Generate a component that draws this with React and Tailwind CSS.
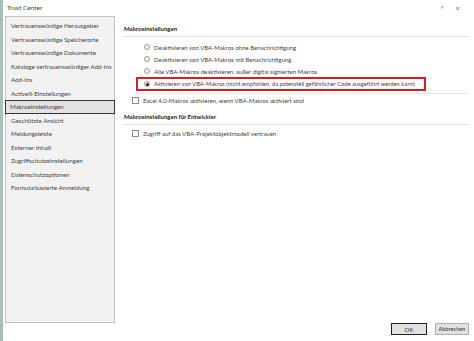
const navItems = [
  'Vertrauenswürdige Herausgeber',
  'Vertrauenswürdige Speicherorte',
  'Vertrauenswürdige Dokumente',
  'Kataloge vertrauenswürdiger Add-Ins',
  'Add-Ins',
  'ActiveX-Einstellungen',
  'Makroeinstellungen',
  'Geschützte Ansicht',
  'Meldungsleiste',
  'Externer Inhalt',
  'Zugriffschutzeinstellungen',
  'Datenschutzoptionen',
  'Formularbasierte Anmeldung',
];

const radios = [
  'Deaktivieren von VBA-Makros ohne Benachrichtigung',
  'Deaktivieren von VBA-Makros mit Benachrichtigung',
  'Alle VBA-Makros deaktivieren, außer digital signierten Makros',
];

const Radio = ({ checked }) => (
  <span className="w-[6px] h-[6px] rounded-full border border-[#9a9a9a] bg-[#f4f4f4] flex items-center justify-center shrink-0">
    {checked && <span className="w-[3px] h-[3px] rounded-full bg-[#222]" />}
  </span>
);

const Check = () => <span className="w-[7px] h-[7px] border border-[#8a8a8a] bg-white shrink-0" />;

export default function App() {
  return (
    <div className="w-[474px] h-[341px] flex bg-white text-[#333] overflow-hidden whitespace-nowrap" style={{ fontFamily: 'Lato, "Noto Sans", sans-serif' }}>
      <div className="w-[3px] bg-[#a7c0b9] shrink-0" />
      <div className="flex-1 flex flex-col">
        <div className="h-[16px] flex items-center pl-[4px] pr-[14px] text-[6.5px] text-[#444]">
          <span className="flex-1">Trust Center</span>
          <span className="text-[#777] mr-[12px]">?</span>
          <span className="text-[#777] text-[8px]">×</span>
        </div>
        <div className="flex-1 flex">
          <div className="ml-[2px] w-[110px] h-[307px] bg-[#f2f2f2] border border-[#c4c4c4] pt-[2px] text-[6.2px] text-[#444]">
            {navItems.map((item) => (
              <div
                key={item}
                className={
                  item === 'Makroeinstellungen'
                    ? 'h-[13.5px] flex items-center pl-[4px] border border-[#333] bg-[#e2e2e2] -mx-[1px]'
                    : 'h-[13.5px] flex items-center pl-[5px]'
                }
              >
                {item}
              </div>
            ))}
          </div>
          <div className="flex-1 pl-[9px] pr-[6px] pt-[8px] text-[6px] text-[#444]">
            <div className="font-bold text-[#222] pb-[3px] border-b border-[#e4e4e4]">Makroeinstellungen</div>
            <div className="pl-[20px] pt-[4px] flex flex-col">
              {radios.map((r) => (
                <div key={r} className="h-[12px] flex items-center gap-[4px]">
                  <Radio />
                  <span>{r}</span>
                </div>
              ))}
            </div>
            <div className="ml-[12px] mr-[42px] h-[14px] border-2 border-[#d0202a] flex items-center gap-[4px] pl-[6px] text-[5.8px]">
              <Radio checked />
              <span>Aktivieren von VBA-Makros (nicht empfohlen, da potenziell gefährlicher Code ausgeführt werden kann)</span>
            </div>
            <div className="ml-[12px] mt-[2px] border-t border-[#e4e4e4]" />
            <div className="h-[13px] flex items-center gap-[4px] pl-[8px]">
              <Check />
              <span>Excel 4.0-Makros aktivieren, wenn VBA-Makros aktiviert sind</span>
            </div>
            <div className="font-bold text-[#222] pt-[5px] pb-[3px] border-b border-[#e4e4e4]">Makroeinstellungen für Entwickler</div>
            <div className="h-[14px] flex items-center gap-[4px] pl-[8px] mt-[1px]">
              <Check />
              <span>Zugriff auf das VBA-Projektobjektmodell vertrauen</span>
            </div>
          </div>
        </div>
        <div className="h-[18px] flex items-start justify-end gap-[8px] pr-[5px] text-[6px] text-[#333]">
          <div className="w-[36px] h-[12px] border border-[#222] bg-[#e1e1e1] flex items-center justify-center">OK</div>
          <div className="w-[34px] h-[12px] border border-[#adadad] bg-[#e1e1e1] flex items-center justify-center text-[5.6px]">Abbrechen</div>
        </div>
      </div>
    </div>
  );
}
